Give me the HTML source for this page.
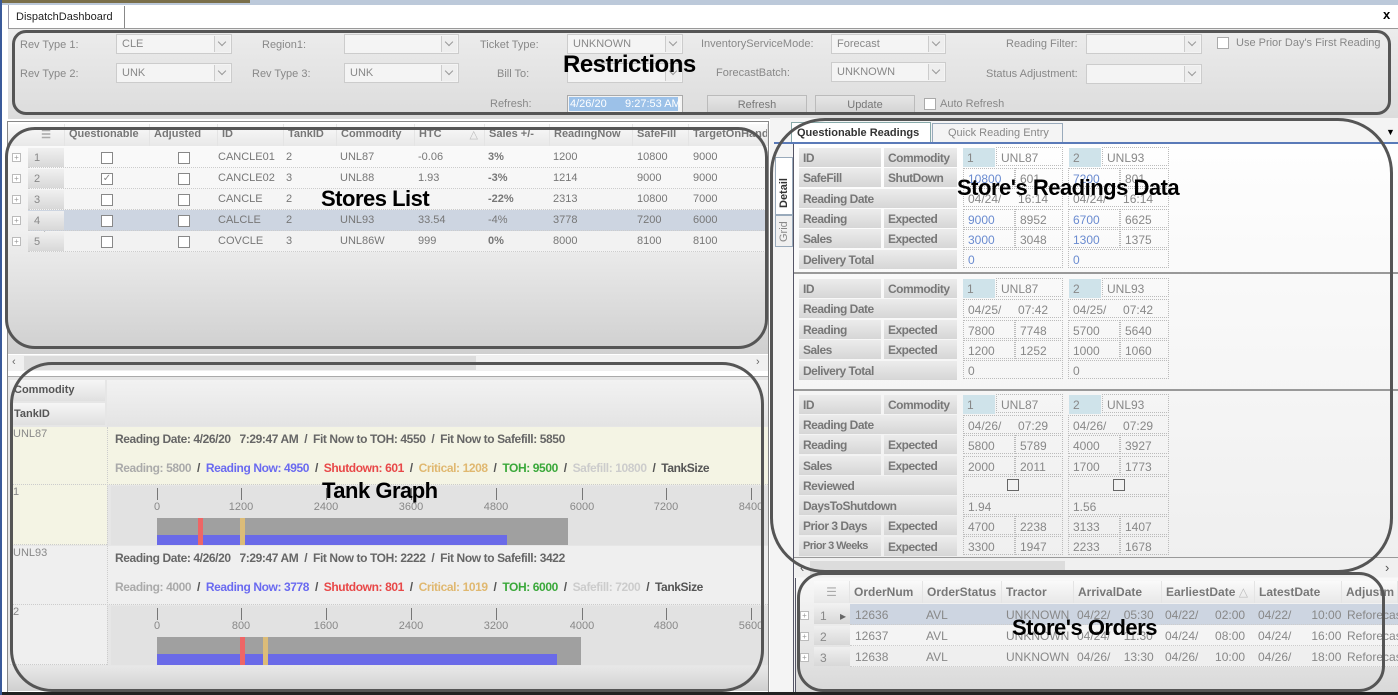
<!DOCTYPE html>
<html><head><meta charset="utf-8">
<style>
*{box-sizing:border-box;margin:0;padding:0}
body{width:1398px;height:695px;overflow:hidden;background:#fff;font-family:"Liberation Sans",sans-serif;font-size:11px;color:#777;position:relative}
.a{position:absolute;white-space:nowrap}
.lbl{position:absolute;color:#888;font-size:11px;white-space:nowrap}
.cb{position:absolute;height:20px;border:1px solid #ccc;background:#f4f4f4;color:#888;font-size:11px;padding:3px 5px}
.cb i{position:absolute;right:1px;top:1px;width:16px;height:16px;border-left:1px solid #ccc;background:#eee}
.cb i:after{content:"";position:absolute;left:4px;top:3px;width:5px;height:5px;border-right:1px solid #999;border-bottom:1px solid #999;transform:rotate(45deg)}
.chk{position:absolute;width:12px;height:12px;border:1px solid #888;background:#fff}
.btn{position:absolute;height:20px;border:1px solid #bbb;background:linear-gradient(#e6e6e6,#d2d2d2);color:#777;text-align:center;padding-top:3px}
.ann{position:absolute;border:3px solid #555;pointer-events:none}
.big{position:absolute;font-weight:bold;font-size:22px;color:#000;white-space:nowrap;letter-spacing:-0.5px}
.gh{position:absolute;top:124px;height:22px;font-weight:bold;color:#777;padding:4px 4px;border-right:1px solid #e4e4e4;background:linear-gradient(#fafafa,#e8e8e8)}
.gr{position:absolute;left:28px;width:740px;height:21px;border-bottom:1px dotted #ccc}
.gr span{position:absolute;top:4px}
.rh{position:absolute;left:28px;width:36px;height:19px;background:linear-gradient(#f0f0f0,#d8d8d8);color:#888;padding:4px 6px}
.pl{position:absolute;left:12px;width:9px;height:9px;border:1px solid #bbb;font-size:8px;line-height:7px;text-align:center;color:#999;background:#fff}
.L{position:absolute;height:19px;background:linear-gradient(#ececec,#d6d6d6);font-weight:bold;color:#777;font-size:12px;padding:3px 4px;letter-spacing:-0.5px;white-space:nowrap;overflow:hidden}
.V{position:absolute;height:19px;border:1px dotted #bbb;color:#888;font-size:12px;padding:3px 4px;white-space:nowrap}
.sel{background:#cfe3ea}
.oh{position:absolute;top:581px;height:22px;font-weight:bold;color:#777;padding:4px 4px;border-right:1px solid #e4e4e4;font-size:12px;white-space:nowrap;overflow:hidden}
.ax{position:absolute;width:1px;height:12px;background:#777}
.al{position:absolute;color:#888;font-size:11px;transform:translateX(-50%)}
.ov{position:absolute;font-size:12px;color:#888;white-space:nowrap}
</style></head><body>
<!-- top -->
<div class="a" style="left:0;top:0;width:1398px;height:5px;background:#bcc9da"></div>
<div class="a" style="left:0;top:0;width:250px;height:3px;background:#7a6f4a"></div>
<div class="a" style="left:8px;top:5px;width:1390px;height:24px;background:#fff;border-bottom:1px solid #999;border-left:1px solid #99a"></div>
<div class="a" style="left:10px;top:6px;width:115px;height:22px;border-right:1px solid #888;color:#222;font-size:11px;padding:5px 6px">DispatchDashboard</div>
<div class="a" style="left:1383px;top:7px;font-weight:bold;color:#000;font-size:13px">x</div>
<div class="a" style="left:8px;top:29px;width:1390px;height:90px;background:linear-gradient(#ececec,#dcdcdc)"></div>
<!-- restrictions -->
<div class="lbl" style="left:20px;top:39px">Rev Type 1:</div><div class="cb" style="left:116px;top:34px;width:116px">CLE<i></i></div>
<div class="lbl" style="left:262px;top:39px">Region1:</div><div class="cb" style="left:344px;top:34px;width:115px"><i></i></div>
<div class="lbl" style="left:480px;top:39px">Ticket Type:</div><div class="cb" style="left:567px;top:34px;width:116px">UNKNOWN<i></i></div>
<div class="lbl" style="left:701px;top:38px">InventoryServiceMode:</div><div class="cb" style="left:831px;top:34px;width:115px">Forecast<i></i></div>
<div class="lbl" style="left:1006px;top:38px">Reading Filter:</div><div class="cb" style="left:1086px;top:34px;width:116px"><i></i></div>
<div class="chk" style="left:1217px;top:37px;border-color:#aaa"></div><div class="lbl" style="left:1236px;top:37px">Use Prior Day's First Reading</div>
<div class="lbl" style="left:20px;top:68px">Rev Type 2:</div><div class="cb" style="left:116px;top:63px;width:116px">UNK<i></i></div>
<div class="lbl" style="left:252px;top:68px">Rev Type 3:</div><div class="cb" style="left:344px;top:63px;width:115px">UNK<i></i></div>
<div class="lbl" style="left:497px;top:68px">Bill To:</div><div class="cb" style="left:567px;top:63px;width:116px"><i></i></div>
<div class="lbl" style="left:716px;top:67px">ForecastBatch:</div><div class="cb" style="left:831px;top:62px;width:115px">UNKNOWN<i></i></div>
<div class="lbl" style="left:986px;top:68px">Status Adjustment:</div><div class="cb" style="left:1086px;top:64px;width:116px"><i></i></div>
<div class="lbl" style="left:490px;top:98px">Refresh:</div>
<div class="a" style="left:567px;top:95px;width:116px;height:18px;border:1px solid #aaa;background:#f4f4f4"></div>
<div class="a" style="left:569px;top:97px;width:109px;height:14px;background:#9cc1e8;color:#fff;padding:1px 1px">4/26/20&nbsp;&nbsp;&nbsp;&nbsp;&nbsp;&nbsp;9:27:53 AM</div>
<div class="btn" style="left:707px;top:95px;width:100px">Refresh</div>
<div class="btn" style="left:815px;top:95px;width:100px">Update</div>
<div class="chk" style="left:924px;top:98px;border-color:#aaa"></div><div class="lbl" style="left:940px;top:98px">Auto Refresh</div>
<div class="ann" style="left:12px;top:30px;width:1379px;height:85px;border-radius:14px"></div>
<div class="big" style="left:563px;top:51px;font-size:24px">Restrictions</div>

<!-- stores list -->
<div class="a" style="left:7px;top:121px;width:762px;height:572px;border:1px solid #888;background:#fff"></div>
<div class="a" style="left:8px;top:146px;width:760px;height:208px;background:linear-gradient(#fafafa 0%,#f0f0f0 40%,#cfcfcf 100%)"></div>
<div class="a" style="left:8px;top:124px;width:760px;height:22px;background:linear-gradient(#fafafa,#e8e8e8)"></div>
<div class="gh" style="left:28px;width:37px;text-align:center;color:#aaa">&#9776;</div>
<div class="gh" style="left:65px;width:85px">Questionable</div>
<div class="gh" style="left:150px;width:68px">Adjusted</div>
<div class="gh" style="left:218px;width:66px">ID</div>
<div class="gh" style="left:284px;width:53px">TankID</div>
<div class="gh" style="left:337px;width:78px">Commodity</div>
<div class="gh" style="left:415px;width:70px">HTC<span style="position:absolute;right:6px;color:#bbb;font-weight:normal">&#9651;</span></div>
<div class="gh" style="left:485px;width:65px">Sales +/-</div>
<div class="gh" style="left:550px;width:83px">ReadingNow</div>
<div class="gh" style="left:633px;width:56px">SafeFill</div>
<div class="gh" style="left:689px;width:79px;white-space:nowrap;overflow:hidden">TargetOnHand</div>

<div class="gr" style="top:147px;background:#f9f9f9"><span style="left:190px">CANCLE01</span><span style="left:258px">2</span><span style="left:312px">UNL87</span><span style="left:390px">-0.06</span><span style="left:460px;font-weight:bold">3%</span><span style="left:525px">1200</span><span style="left:609px">10800</span><span style="left:665px">9000</span></div>
<div class="gr" style="top:168px;background:#f7f7f7"><span style="left:190px">CANCLE02</span><span style="left:258px">3</span><span style="left:312px">UNL88</span><span style="left:390px">1.93</span><span style="left:460px;font-weight:bold">-3%</span><span style="left:525px">1214</span><span style="left:609px">9000</span><span style="left:665px">9000</span></div>
<div class="gr" style="top:189px;background:#f5f5f5"><span style="left:190px">CANCLE</span><span style="left:258px">2</span><span style="left:460px;font-weight:bold">-22%</span><span style="left:525px">2313</span><span style="left:609px">10800</span><span style="left:665px">7000</span></div>
<div class="gr" style="top:210px;background:#cdd5e1"><span style="left:190px">CALCLE</span><span style="left:258px">2</span><span style="left:312px">UNL93</span><span style="left:390px">33.54</span><span style="left:460px">-4%</span><span style="left:525px">3778</span><span style="left:609px">7200</span><span style="left:665px">6000</span></div>
<div class="gr" style="top:231px;background:#f2f2f2"><span style="left:190px">COVCLE</span><span style="left:258px">3</span><span style="left:312px">UNL86W</span><span style="left:390px">999</span><span style="left:460px;font-weight:bold">0%</span><span style="left:525px">8000</span><span style="left:609px">8100</span><span style="left:665px">8100</span></div>
<div class="rh" style="top:148px">1</div><div class="rh" style="top:169px">2</div><div class="rh" style="top:190px">3</div><div class="rh" style="top:211px">4 <span style="color:#666;margin-left:10px">&#9656;</span></div><div class="rh" style="top:232px">5</div>
<div class="pl" style="top:153px">+</div><div class="pl" style="top:174px">+</div><div class="pl" style="top:195px">+</div><div class="pl" style="top:216px">+</div><div class="pl" style="top:237px">+</div>
<div class="chk" style="left:101px;top:152px"></div><div class="chk" style="left:178px;top:152px"></div>
<div class="chk" style="left:101px;top:173px;font-size:10px;line-height:9px;text-align:center;color:#888">&#10003;</div><div class="chk" style="left:178px;top:173px"></div>
<div class="chk" style="left:101px;top:194px"></div><div class="chk" style="left:178px;top:194px"></div>
<div class="chk" style="left:101px;top:215px"></div><div class="chk" style="left:178px;top:215px"></div>
<div class="chk" style="left:101px;top:236px"></div><div class="chk" style="left:178px;top:236px"></div>
<div class="a" style="left:8px;top:355px;width:760px;height:16px;background:#f0f0f0"></div>
<div class="a" style="left:24px;top:356px;width:452px;height:14px;background:#dcdcdc"></div>
<div class="a" style="left:12px;top:356px;color:#666">&lsaquo;</div><div class="a" style="left:756px;top:356px;color:#666">&rsaquo;</div>
<div class="ann" style="left:5px;top:127px;width:763px;height:222px;border-radius:30px"></div>
<div class="big" style="left:321px;top:186px">Stores List</div>

<!-- tank graph -->
<div class="a" style="left:8px;top:376px;width:760px;height:315px;background:#e6e6e6;border-top:1px solid #aaa"></div>
<div class="a" style="left:107px;top:380px;width:661px;height:46px;background:linear-gradient(#f2f2f2,#e4e4e4)"></div>
<div class="a" style="left:10px;top:380px;width:95px;height:21px;background:linear-gradient(#f6f6f6,#e0e0e0);font-weight:bold;color:#555;padding:4px 4px">Commodity</div>
<div class="a" style="left:10px;top:403px;width:95px;height:22px;background:linear-gradient(#f6f6f6,#e0e0e0);font-weight:bold;color:#555;padding:5px 4px">TankID</div>
<div class="a" style="left:10px;top:427px;width:758px;height:58px;background:#f4f4e4;border-bottom:1px dotted #ccc"></div>
<div class="a" style="left:10px;top:485px;width:97px;height:60px;background:#f4f4e4;border-bottom:1px dotted #ccc"></div>
<div class="a" style="left:10px;top:546px;width:758px;height:59px;background:#efefef;border-bottom:1px dotted #ccc"></div>
<div class="a" style="left:10px;top:605px;width:97px;height:60px;background:#efefef;border-bottom:1px dotted #ccc"></div>
<div class="a" style="left:107px;top:427px;width:1px;height:238px;border-left:1px dotted #ccc"></div>
<div class="a" style="left:111px;top:486px;width:657px;height:59px;background:#e2e2e2"></div>
<div class="a" style="left:111px;top:606px;width:657px;height:59px;background:#e2e2e2"></div>
<div class="a" style="left:13px;top:428px;color:#888">UNL87</div>
<div class="a" style="left:13px;top:486px;color:#888">1</div>
<div class="a" style="left:13px;top:547px;color:#888">UNL93</div>
<div class="a" style="left:13px;top:606px;color:#888">2</div>
<div class="a" style="left:115px;top:432px;color:#666;font-size:12px;font-weight:bold;letter-spacing:-0.4px">Reading Date: 4/26/20&nbsp;&nbsp;&nbsp;7:29:47 AM&nbsp;&nbsp;/&nbsp;&nbsp;Fit Now to TOH: 4550&nbsp;&nbsp;/&nbsp;&nbsp;Fit Now to Safefill: 5850</div>
<div class="a" style="left:115px;top:461px;font-size:12px;font-weight:bold;letter-spacing:-0.4px;color:#555"><span style="color:#aaa">Reading: 5800</span>&nbsp;&nbsp;/&nbsp;&nbsp;<span style="color:#6a6af0">Reading Now: 4950</span>&nbsp;&nbsp;/&nbsp;&nbsp;<span style="color:#e84848">Shutdown: 601</span>&nbsp;&nbsp;/&nbsp;&nbsp;<span style="color:#e0b870">Critical: 1208</span>&nbsp;&nbsp;/&nbsp;&nbsp;<span style="color:#3aa83a">TOH: 9500</span>&nbsp;&nbsp;/&nbsp;&nbsp;<span style="color:#ccc">Safefill: 10800</span>&nbsp;&nbsp;/&nbsp;&nbsp;TankSize</div>
<div class="a" style="left:115px;top:551px;color:#666;font-size:12px;font-weight:bold;letter-spacing:-0.4px">Reading Date: 4/26/20&nbsp;&nbsp;&nbsp;7:29:47 AM&nbsp;&nbsp;/&nbsp;&nbsp;Fit Now to TOH: 2222&nbsp;&nbsp;/&nbsp;&nbsp;Fit Now to Safefill: 3422</div>
<div class="a" style="left:115px;top:580px;font-size:12px;font-weight:bold;letter-spacing:-0.4px;color:#555"><span style="color:#aaa">Reading: 4000</span>&nbsp;&nbsp;/&nbsp;&nbsp;<span style="color:#6a6af0">Reading Now: 3778</span>&nbsp;&nbsp;/&nbsp;&nbsp;<span style="color:#e84848">Shutdown: 801</span>&nbsp;&nbsp;/&nbsp;&nbsp;<span style="color:#e0b870">Critical: 1019</span>&nbsp;&nbsp;/&nbsp;&nbsp;<span style="color:#3aa83a">TOH: 6000</span>&nbsp;&nbsp;/&nbsp;&nbsp;<span style="color:#ccc">Safefill: 7200</span>&nbsp;&nbsp;/&nbsp;&nbsp;TankSize</div>
<!-- axis 1 -->
<div class="ax" style="left:157px;top:488px"></div><div class="ax" style="left:241px;top:488px"></div><div class="ax" style="left:326px;top:488px"></div><div class="ax" style="left:411px;top:488px"></div><div class="ax" style="left:496px;top:488px"></div><div class="ax" style="left:582px;top:488px"></div><div class="ax" style="left:666px;top:488px"></div><div class="ax" style="left:751px;top:488px"></div>
<div class="al" style="left:157px;top:501px">0</div><div class="al" style="left:241px;top:501px">1200</div><div class="al" style="left:326px;top:501px">2400</div><div class="al" style="left:411px;top:501px">3600</div><div class="al" style="left:496px;top:501px">4800</div><div class="al" style="left:582px;top:501px">6000</div><div class="al" style="left:666px;top:501px">7200</div><div class="al" style="left:751px;top:501px">8400</div>
<div class="a" style="left:157px;top:518px;width:411px;height:27px;background:#a0a0a0"></div>
<div class="a" style="left:157px;top:535px;width:350px;height:10px;background:#6a6ae8"></div>
<div class="a" style="left:198px;top:518px;width:5px;height:27px;background:#e66"></div>
<div class="a" style="left:240px;top:518px;width:5px;height:27px;background:#dcbc78"></div>
<!-- axis 2 -->
<div class="ax" style="left:157px;top:608px"></div><div class="ax" style="left:241px;top:608px"></div><div class="ax" style="left:326px;top:608px"></div><div class="ax" style="left:411px;top:608px"></div><div class="ax" style="left:496px;top:608px"></div><div class="ax" style="left:582px;top:608px"></div><div class="ax" style="left:666px;top:608px"></div><div class="ax" style="left:751px;top:608px"></div>
<div class="al" style="left:157px;top:620px">0</div><div class="al" style="left:241px;top:620px">800</div><div class="al" style="left:326px;top:620px">1600</div><div class="al" style="left:411px;top:620px">2400</div><div class="al" style="left:496px;top:620px">3200</div><div class="al" style="left:582px;top:620px">4000</div><div class="al" style="left:666px;top:620px">4800</div><div class="al" style="left:751px;top:620px">5600</div>
<div class="a" style="left:157px;top:637px;width:424px;height:28px;background:#a0a0a0"></div>
<div class="a" style="left:157px;top:654px;width:400px;height:11px;background:#6a6ae8"></div>
<div class="a" style="left:240px;top:637px;width:5px;height:28px;background:#e66"></div>
<div class="a" style="left:263px;top:637px;width:5px;height:28px;background:#dcbc78"></div>
<div class="a" style="left:8px;top:666px;width:760px;height:25px;background:linear-gradient(#e8e8e8,#d0d0d0)"></div>
<div class="ann" style="left:10px;top:362px;width:754px;height:330px;border-radius:42px"></div>
<div class="big" style="left:322px;top:478px">Tank Graph</div>

<!-- right panel -->
<div class="a" style="left:770px;top:118px;width:628px;height:577px;background:#f4f4f4"></div>
<div class="a" style="left:791px;top:122px;width:140px;height:21px;background:#fff;border:1px solid #8aa;border-bottom:none;font-weight:bold;color:#333;padding:4px 5px">Questionable Readings</div>
<div class="a" style="left:932px;top:123px;width:131px;height:19px;background:#f4f4f4;border:1px solid #9ab;border-bottom:none;color:#888;padding:3px 15px">Quick Reading Entry</div>
<div class="a" style="left:1386px;top:127px;font-size:9px;color:#000">&#9660;</div>
<div class="a" style="left:774px;top:142px;width:624px;height:2px;background:#5a7ab8"></div>
<div class="a" style="left:794px;top:144px;width:604px;height:416px;background:linear-gradient(#fefefe,#efefef)"></div>
<div class="a" style="left:774px;top:144px;width:20px;height:551px;border-right:1px solid #556"></div>
<div class="a" style="left:775px;top:157px;width:18px;height:58px;background:#fff;border:1px solid #9ab"><span style="position:absolute;left:2px;top:50px;transform:rotate(-90deg);transform-origin:0 0;font-weight:bold;color:#333">Detail</span></div>
<div class="a" style="left:775px;top:215px;width:18px;height:32px;background:#f0f0f0;border:1px solid #9ab"><span style="position:absolute;left:2px;top:26px;transform:rotate(-90deg);transform-origin:0 0;color:#888">Grid</span></div>
<div class="a" style="left:794px;top:272px;width:604px;height:2px;background:#999"></div>
<div class="a" style="left:794px;top:389px;width:604px;height:2px;background:#999"></div>
<div class="a" style="left:794px;top:557px;width:604px;height:1px;background:#999"></div>

<!-- block1 -->
<div class="L" style="left:799px;top:148px;width:82px">ID</div><div class="L" style="left:884px;top:148px;width:73px">Commodity</div>
<div class="L" style="left:799px;top:168px;width:82px">SafeFill</div><div class="L" style="left:884px;top:168px;width:73px">ShutDown</div>
<div class="L" style="left:799px;top:189px;width:158px">Reading Date</div>
<div class="L" style="left:799px;top:209px;width:82px">Reading</div><div class="L" style="left:884px;top:209px;width:73px">Expected</div>
<div class="L" style="left:799px;top:229px;width:82px">Sales</div><div class="L" style="left:884px;top:229px;width:73px">Expected</div>
<div class="L" style="left:799px;top:250px;width:158px">Delivery Total</div>
<div class="V sel" style="left:963px;top:148px;width:32px;border:none">1</div><div class="V" style="left:996px;top:147px;width:67px">UNL87</div>
<div class="V sel" style="left:1069px;top:148px;width:32px;border:none">2</div><div class="V" style="left:1102px;top:147px;width:67px">UNL93</div>
<div class="V" style="left:963px;top:168px;width:52px;color:#6a8bd0">10800</div><div class="V" style="left:1015px;top:168px;width:48px">601</div>
<div class="V" style="left:1068px;top:168px;width:52px;color:#6a8bd0">7200</div><div class="V" style="left:1120px;top:168px;width:49px">801</div>
<div class="V" style="left:963px;top:188px;width:100px">04/24/&nbsp;&nbsp;&nbsp;&nbsp;&nbsp;16:14</div><div class="V" style="left:1068px;top:188px;width:101px">04/24/&nbsp;&nbsp;&nbsp;&nbsp;&nbsp;16:14</div>
<div class="V" style="left:963px;top:209px;width:52px;color:#6a8bd0">9000</div><div class="V" style="left:1015px;top:209px;width:48px">8952</div>
<div class="V" style="left:1068px;top:209px;width:52px;color:#6a8bd0">6700</div><div class="V" style="left:1120px;top:209px;width:49px">6625</div>
<div class="V" style="left:963px;top:229px;width:52px;color:#6a8bd0">3000</div><div class="V" style="left:1015px;top:229px;width:48px">3048</div>
<div class="V" style="left:1068px;top:229px;width:52px;color:#6a8bd0">1300</div><div class="V" style="left:1120px;top:229px;width:49px">1375</div>
<div class="V" style="left:963px;top:249px;width:100px;color:#6a8bd0">0</div><div class="V" style="left:1068px;top:249px;width:101px;color:#6a8bd0">0</div>
<!-- block2 -->
<div class="L" style="left:799px;top:279px;width:82px">ID</div><div class="L" style="left:884px;top:279px;width:73px">Commodity</div>
<div class="L" style="left:799px;top:299px;width:158px">Reading Date</div>
<div class="L" style="left:799px;top:320px;width:82px">Reading</div><div class="L" style="left:884px;top:320px;width:73px">Expected</div>
<div class="L" style="left:799px;top:340px;width:82px">Sales</div><div class="L" style="left:884px;top:340px;width:73px">Expected</div>
<div class="L" style="left:799px;top:361px;width:158px">Delivery Total</div>
<div class="V sel" style="left:963px;top:279px;width:32px;border:none">1</div><div class="V" style="left:996px;top:278px;width:67px">UNL87</div>
<div class="V sel" style="left:1069px;top:279px;width:32px;border:none">2</div><div class="V" style="left:1102px;top:278px;width:67px">UNL93</div>
<div class="V" style="left:963px;top:299px;width:100px">04/25/&nbsp;&nbsp;&nbsp;&nbsp;&nbsp;07:42</div><div class="V" style="left:1068px;top:299px;width:101px">04/25/&nbsp;&nbsp;&nbsp;&nbsp;&nbsp;07:42</div>
<div class="V" style="left:963px;top:320px;width:52px">7800</div><div class="V" style="left:1015px;top:320px;width:48px">7748</div>
<div class="V" style="left:1068px;top:320px;width:52px">5700</div><div class="V" style="left:1120px;top:320px;width:49px">5640</div>
<div class="V" style="left:963px;top:340px;width:52px">1200</div><div class="V" style="left:1015px;top:340px;width:48px">1252</div>
<div class="V" style="left:1068px;top:340px;width:52px">1000</div><div class="V" style="left:1120px;top:340px;width:49px">1060</div>
<div class="V" style="left:963px;top:360px;width:100px">0</div><div class="V" style="left:1068px;top:360px;width:101px">0</div>
<!-- block3 -->
<div class="L" style="left:799px;top:395px;width:82px">ID</div><div class="L" style="left:884px;top:395px;width:73px">Commodity</div>
<div class="L" style="left:799px;top:415px;width:158px">Reading Date</div>
<div class="L" style="left:799px;top:435px;width:82px">Reading</div><div class="L" style="left:884px;top:435px;width:73px">Expected</div>
<div class="L" style="left:799px;top:456px;width:82px">Sales</div><div class="L" style="left:884px;top:456px;width:73px">Expected</div>
<div class="L" style="left:799px;top:476px;width:158px">Reviewed</div>
<div class="L" style="left:799px;top:496px;width:158px">DaysToShutdown</div>
<div class="L" style="left:799px;top:516px;width:82px">Prior 3 Days</div><div class="L" style="left:884px;top:516px;width:73px">Expected</div>
<div class="L" style="left:799px;top:537px;width:82px;font-size:11px;letter-spacing:-0.6px">Prior 3 Weeks</div><div class="L" style="left:884px;top:537px;width:73px">Expected</div>
<div class="V sel" style="left:963px;top:395px;width:32px;border:none">1</div><div class="V" style="left:996px;top:394px;width:67px">UNL87</div>
<div class="V sel" style="left:1069px;top:395px;width:32px;border:none">2</div><div class="V" style="left:1102px;top:394px;width:67px">UNL93</div>
<div class="V" style="left:963px;top:415px;width:100px">04/26/&nbsp;&nbsp;&nbsp;&nbsp;&nbsp;07:29</div><div class="V" style="left:1068px;top:415px;width:101px">04/26/&nbsp;&nbsp;&nbsp;&nbsp;&nbsp;07:29</div>
<div class="V" style="left:963px;top:435px;width:52px">5800</div><div class="V" style="left:1015px;top:435px;width:48px">5789</div>
<div class="V" style="left:1068px;top:435px;width:52px">4000</div><div class="V" style="left:1120px;top:435px;width:49px">3927</div>
<div class="V" style="left:963px;top:456px;width:52px">2000</div><div class="V" style="left:1015px;top:456px;width:48px">2011</div>
<div class="V" style="left:1068px;top:456px;width:52px">1700</div><div class="V" style="left:1120px;top:456px;width:49px">1773</div>
<div class="V" style="left:963px;top:476px;width:100px"></div><div class="V" style="left:1068px;top:476px;width:101px"></div>
<div class="chk" style="left:1007px;top:479px;border-color:#666;background:transparent"></div><div class="chk" style="left:1113px;top:479px;border-color:#666;background:transparent"></div>
<div class="V" style="left:963px;top:496px;width:100px">1.94</div><div class="V" style="left:1068px;top:496px;width:101px">1.56</div>
<div class="V" style="left:963px;top:516px;width:52px">4700</div><div class="V" style="left:1015px;top:516px;width:48px">2238</div>
<div class="V" style="left:1068px;top:516px;width:52px">3133</div><div class="V" style="left:1120px;top:516px;width:49px">1407</div>
<div class="V" style="left:963px;top:536px;width:52px">3300</div><div class="V" style="left:1015px;top:536px;width:48px">1947</div>
<div class="V" style="left:1068px;top:536px;width:52px">2233</div><div class="V" style="left:1120px;top:536px;width:49px">1678</div>
<!-- right scrollbar -->
<div class="a" style="left:795px;top:559px;width:603px;height:18px;background:#f0f0f0"></div>
<div class="a" style="left:810px;top:561px;width:255px;height:14px;background:#dcdcdc"></div>
<div class="a" style="left:800px;top:560px;color:#555;font-size:13px">&lsaquo;</div><div class="a" style="left:1385px;top:560px;color:#555;font-size:13px">&rsaquo;</div>
<!-- orders -->
<div class="a" style="left:795px;top:578px;width:603px;height:117px;background:linear-gradient(#f8f8f8,#d8d8d8)"></div>
<div class="a" style="left:795px;top:578px;width:1px;height:117px;background:#556"></div>
<div class="a" style="left:814px;top:581px;width:584px;height:22px;background:linear-gradient(#fafafa,#e8e8e8)"></div>
<div class="oh" style="left:814px;width:36px;text-align:center;color:#aaa;font-weight:normal">&#9776;</div>
<div class="oh" style="left:850px;width:73px">OrderNum</div>
<div class="oh" style="left:923px;width:79px">OrderStatus</div>
<div class="oh" style="left:1002px;width:72px">Tractor</div>
<div class="oh" style="left:1074px;width:88px">ArrivalDate</div>
<div class="oh" style="left:1162px;width:93px">EarliestDate <span style="color:#bbb;font-weight:normal">&#9651;</span></div>
<div class="oh" style="left:1255px;width:87px">LatestDate</div>
<div class="oh" style="left:1342px;width:56px">Adjustm</div>
<div class="a" style="left:850px;top:604px;width:548px;height:21px;background:#cdd5e1;border-bottom:1px dotted #ccc"></div>
<div class="a" style="left:850px;top:625px;width:548px;height:21px;background:#f4f4f4;border-bottom:1px dotted #ccc"></div>
<div class="a" style="left:850px;top:646px;width:548px;height:21px;background:#efefef;border-bottom:1px dotted #ccc"></div>
<div class="a" style="left:814px;top:605px;width:36px;height:19px;background:linear-gradient(#f0f0f0,#d8d8d8);color:#888;padding:4px 6px;font-size:12px">1 <span style="color:#666;margin-left:10px">&#9656;</span></div>
<div class="a" style="left:814px;top:626px;width:36px;height:19px;background:linear-gradient(#f0f0f0,#d8d8d8);color:#888;padding:4px 6px;font-size:12px">2</div>
<div class="a" style="left:814px;top:647px;width:36px;height:19px;background:linear-gradient(#f0f0f0,#d8d8d8);color:#888;padding:4px 6px;font-size:12px">3</div>
<div class="pl" style="left:800px;top:611px">+</div><div class="pl" style="left:800px;top:632px">+</div><div class="pl" style="left:800px;top:653px">+</div>
<div class="ov" style="left:855px;top:608px">12636</div><div class="ov" style="left:926px;top:608px">AVL</div><div class="ov" style="left:1006px;top:608px">UNKNOWN</div><div class="ov" style="left:1077px;top:608px">04/22/&nbsp;&nbsp;&nbsp;&nbsp;05:30</div><div class="ov" style="left:1165px;top:608px">04/22/&nbsp;&nbsp;&nbsp;&nbsp;&nbsp;02:00</div><div class="ov" style="left:1258px;top:608px">04/22/&nbsp;&nbsp;&nbsp;&nbsp;&nbsp;&nbsp;10:00</div><div class="ov" style="left:1347px;top:608px">Reforecast</div>
<div class="ov" style="left:855px;top:629px">12637</div><div class="ov" style="left:926px;top:629px">AVL</div><div class="ov" style="left:1006px;top:629px">UNKNOWN</div><div class="ov" style="left:1077px;top:629px">04/24/&nbsp;&nbsp;&nbsp;&nbsp;11:30</div><div class="ov" style="left:1165px;top:629px">04/24/&nbsp;&nbsp;&nbsp;&nbsp;&nbsp;08:00</div><div class="ov" style="left:1258px;top:629px">04/24/&nbsp;&nbsp;&nbsp;&nbsp;&nbsp;&nbsp;16:00</div><div class="ov" style="left:1347px;top:629px">Reforecast</div>
<div class="ov" style="left:855px;top:650px">12638</div><div class="ov" style="left:926px;top:650px">AVL</div><div class="ov" style="left:1006px;top:650px">UNKNOWN</div><div class="ov" style="left:1077px;top:650px">04/26/&nbsp;&nbsp;&nbsp;&nbsp;13:30</div><div class="ov" style="left:1165px;top:650px">04/26/&nbsp;&nbsp;&nbsp;&nbsp;&nbsp;10:00</div><div class="ov" style="left:1258px;top:650px">04/26/&nbsp;&nbsp;&nbsp;&nbsp;&nbsp;&nbsp;18:00</div><div class="ov" style="left:1347px;top:650px">Reforecast</div>
<div class="a" style="left:0;top:692px;width:1398px;height:3px;background:#222"></div>
<div class="a" style="left:0;top:0;width:2px;height:695px;background:#3a5a9a"></div>
<div class="ann" style="left:770px;top:118px;width:623px;height:455px;border-radius:55px"></div>
<div class="ann" style="left:797px;top:572px;width:588px;height:120px;border-radius:26px"></div>
<div class="big" style="left:957px;top:175px">Store's Readings Data</div>
<div class="big" style="left:1012px;top:615px">Store's Orders</div>
</body></html>
